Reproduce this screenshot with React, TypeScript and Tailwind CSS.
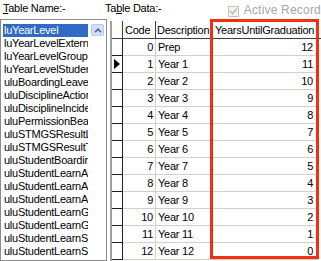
import React from 'react';

const tables = [
  'luYearLevel',
  'luYearLevelExternal',
  'luYearLevelGroup',
  'luYearLevelStudent',
  'uluBoardingLeave',
  'uluDisciplineAction',
  'uluDisciplineIncident',
  'uluPermissionBearer',
  'uluSTMGSResultLevel',
  'uluSTMGSResultType',
  'uluStudentBoarding',
  'uluStudentLearnArea',
  'uluStudentLearnAspect',
  'uluStudentLearnAssess',
  'uluStudentLearnGrade',
  'uluStudentLearnGroup',
  'uluStudentLearnScale',
  'uluStudentLearnStrand',
  'uluStudentLearnStyle',
];

const rows = [
  { code: 0, desc: 'Prep', years: 12 },
  { code: 1, desc: 'Year 1', years: 11 },
  { code: 2, desc: 'Year 2', years: 10 },
  { code: 3, desc: 'Year 3', years: 9 },
  { code: 4, desc: 'Year 4', years: 8 },
  { code: 5, desc: 'Year 5', years: 7 },
  { code: 6, desc: 'Year 6', years: 6 },
  { code: 7, desc: 'Year 7', years: 5 },
  { code: 8, desc: 'Year 8', years: 4 },
  { code: 9, desc: 'Year 9', years: 3 },
  { code: 10, desc: 'Year 10', years: 2 },
  { code: 11, desc: 'Year 11', years: 1 },
  { code: 12, desc: 'Year 12', years: 0 },
];

const App: React.FC = () => {
  return (
    <div className="relative w-[321px] h-[261px] overflow-hidden bg-white text-[11px] leading-[13px] tracking-[-0.25px] text-black font-['Liberation_Sans',Arial,sans-serif]">
      {/* labels */}
      <div className="flex h-[19px] items-start pt-[2px]">
        <div className="w-[112px] pl-[3px]">
          <span className="underline">T</span>able Name:-
        </div>
        <div className="w-[131px]">
          Ta<span className="underline">b</span>le Data:-
        </div>
        <div className="flex items-start gap-[5px] pt-[4px] text-[#a6a6a6] text-[12px] whitespace-nowrap">
          <div className="w-[11px] h-[11px] border border-[#c4c3bb] bg-[#f4f4f0] flex items-center justify-center">
            <svg width="9" height="9" viewBox="0 0 9 9">
              <path d="M1 4 L3.5 6.5 L8 1.5" stroke="#bcbcb4" strokeWidth="1.6" fill="none" />
            </svg>
          </div>
          <span className="-mt-[2px] tracking-[0.2px]">Active Record</span>
        </div>
      </div>

      <div className="flex">
        {/* list box */}
        <div className="w-[107px] h-[242px] border border-[#8c8c8c] flex overflow-hidden">
          <div className="flex-1 pt-[4px] pl-[2px] overflow-hidden">
            {tables.map((t, i) => (
              <div
                key={t}
                className={`h-[13px] w-[85px] pl-[1px] whitespace-nowrap overflow-hidden ${
                  i === 0 ? 'bg-[#316ac5] text-white' : ''
                }`}
              >
                {t}
              </div>
            ))}
          </div>
          <div className="w-[16px] pt-[4px] pl-[1px]">
            <div className="w-[13px] h-[12px] rounded-[2px] border border-[#b5c8f3] bg-[#d3e0fb] flex items-center justify-center">
              <svg width="8" height="5" viewBox="0 0 8 5">
                <path d="M1 4.2 L4 1.2 L7 4.2" stroke="#4d6185" strokeWidth="1.6" fill="none" />
              </svg>
            </div>
          </div>
        </div>

        {/* data grid */}
        <div className="ml-[3px] mt-[2px] flex-1 h-[240px] border-l-2 border-[#a0a0a0] overflow-hidden">
          <div className="flex h-[18px] border-b border-[#404040]">
            <div className="w-[11px] border-r border-[#404040]" />
            <div className="w-[33px] border-r border-[#404040] pl-[2px] pt-[3px]">Code</div>
            <div className="w-[56px] border-r border-[#404040] pl-[1px] pt-[3px] whitespace-nowrap overflow-hidden">
              Description
            </div>
            <div className="w-[106px] border-r border-[#404040] pl-[3px] pt-[3px] whitespace-nowrap overflow-hidden">
              YearsUntilGraduation
            </div>
          </div>
          {rows.map((r) => (
            <div key={r.code} className="flex h-[17px]">
              <div className="w-[11px] border-r border-b border-[#202020] flex items-center">
                {r.code === 1 && (
                  <svg width="7" height="10" viewBox="0 0 7 10" className="ml-[2px]">
                    <path d="M0 0 L6 5 L0 10 Z" fill="#000" />
                  </svg>
                )}
              </div>
              <div className="w-[33px] border-r border-b border-[#d4d0c8] text-right pr-[2px] pt-[2px]">{r.code}</div>
              <div className="w-[56px] border-r border-b border-[#d4d0c8] pl-[2px] pt-[2px] whitespace-nowrap">{r.desc}</div>
              <div className="w-[106px] border-r border-b border-[#d4d0c8] text-right pr-[4px] pt-[2px]">{r.years}</div>
            </div>
          ))}
        </div>
      </div>

      {/* highlight annotation */}
      <div className="absolute left-[210px] top-[19px] w-[109px] h-[240px] border-[3px] border-[#f2300f]" />
    </div>
  );
};

export default App;
